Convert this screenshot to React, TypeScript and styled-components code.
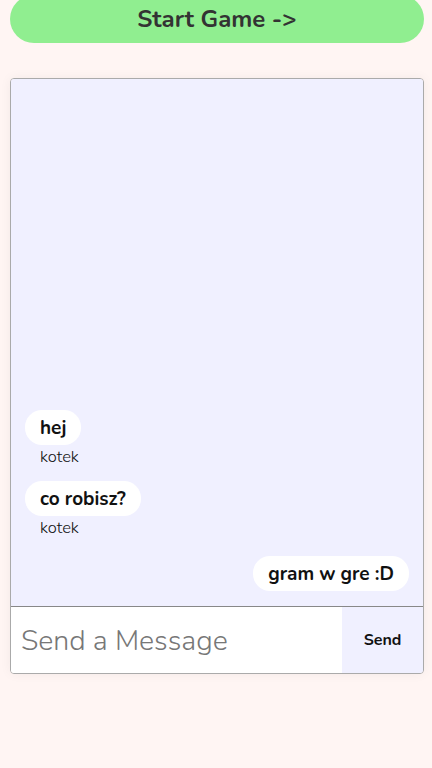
import React from "react";
import styled, { createGlobalStyle } from "styled-components";

const Global = createGlobalStyle`
  html, body { margin: 0; padding: 0; background: #fff5f3; }
  body { font-family: "Nunito", "Lato", "Open Sans", sans-serif; }
  * { box-sizing: border-box; }
`;

const Page = styled.div`
  display: flex;
  flex-direction: column;
  padding: 0 8px 0 10px;
  height: 768px;
  overflow: hidden;
`;

const StartButton = styled.button`
  margin-top: -5px;
  height: 48px;
  width: 414px;
  border: none;
  border-radius: 24px;
  background: #90ee90;
  color: #333;
  font-family: inherit;
  font-size: 24px;
  font-weight: 700;
  padding: 0;
`;

const ChatBox = styled.div`
  margin-top: 35px;
  width: 414px;
  height: 596px;
  display: flex;
  flex-direction: column;
  border: 1px solid #aaa;
  border-radius: 4px;
  overflow: hidden;
  box-shadow: 0 0 12px rgba(0, 0, 0, 0.05);
`;

const Messages = styled.div`
  flex: 1;
  background: #f0f0ff;
  display: flex;
  flex-direction: column;
  justify-content: flex-end;
  padding: 0 14px 15px 14px;
  border-bottom: 1px solid #888;
`;

const MessageGroup = styled.div<{ $mine?: boolean }>`
  display: flex;
  flex-direction: column;
  align-items: ${(p) => (p.$mine ? "flex-end" : "flex-start")};
  margin-top: ${(p) => (p.$mine ? "18px" : "14px")};
`;

const Bubble = styled.div`
  background: #fff;
  border-radius: 17px;
  height: 35px;
  padding: 0 15px;
  display: flex;
  align-items: center;
  font-size: 19px;
  font-weight: 700;
  color: #111;
`;

const Author = styled.div`
  font-size: 16.5px;
  font-weight: 300;
  color: #111;
  padding-left: 15px;
  margin-top: 2px;
  line-height: 20px;
`;

const InputRow = styled.div`
  display: flex;
  height: 66px;
`;

const Input = styled.input`
  flex: 1;
  min-width: 0;
  border: none;
  outline: none;
  background: #fff;
  font-family: inherit;
  font-size: 28.5px;
  font-weight: 300;
  padding: 0 10px;
  color: #333;
  &::placeholder { color: #777; }
`;

const SendButton = styled.button`
  width: 81px;
  border: none;
  background: #f0f0ff;
  font-family: inherit;
  font-size: 16px;
  font-weight: 700;
  color: #111;
  padding: 0;
`;

export default function App() {
  return (
    <>
      <Global />
      <Page>
        <StartButton>Start Game -&gt;</StartButton>
        <ChatBox>
          <Messages>
            <MessageGroup>
              <Bubble>hej</Bubble>
              <Author>kotek</Author>
            </MessageGroup>
            <MessageGroup>
              <Bubble>co robisz?</Bubble>
              <Author>kotek</Author>
            </MessageGroup>
            <MessageGroup $mine>
              <Bubble>gram w gre :D</Bubble>
            </MessageGroup>
          </Messages>
          <InputRow>
            <Input placeholder="Send a Message" />
            <SendButton>Send</SendButton>
          </InputRow>
        </ChatBox>
      </Page>
    </>
  );
}
